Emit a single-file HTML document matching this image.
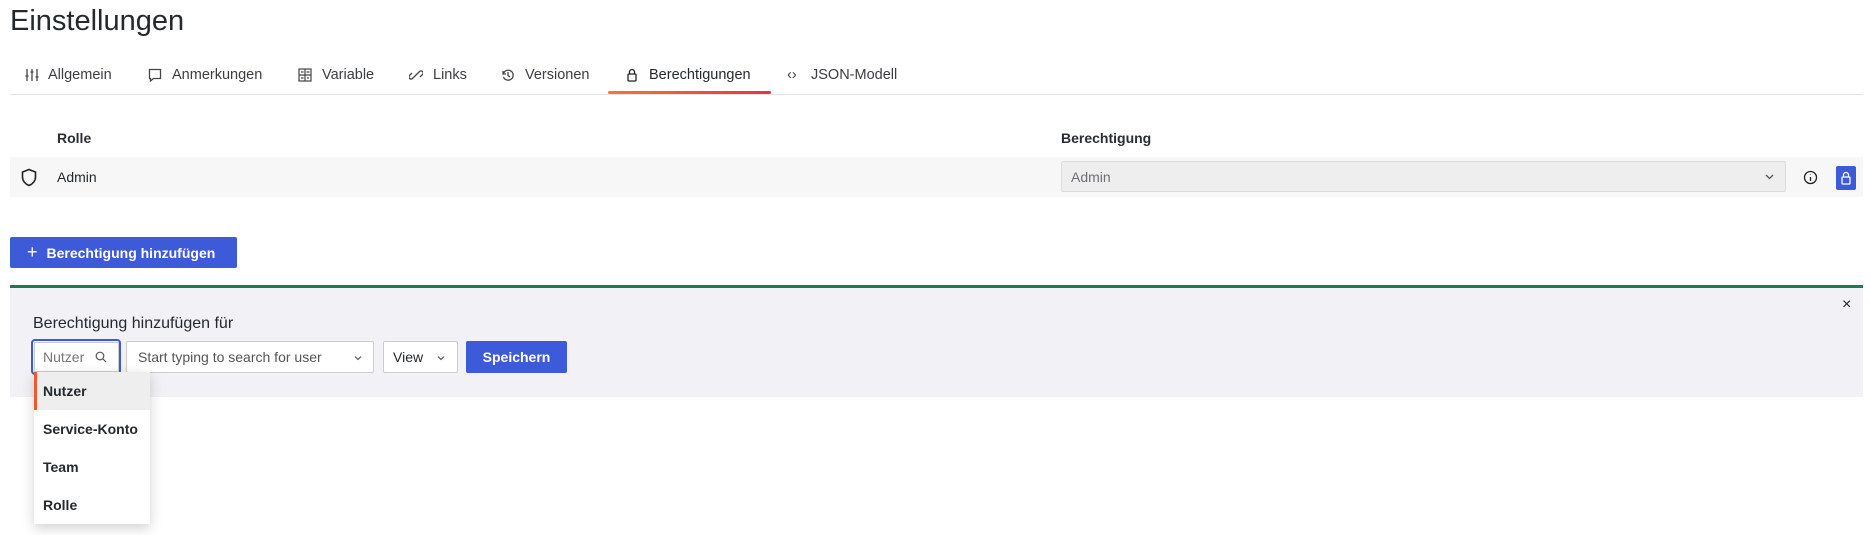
<!DOCTYPE html>
<html><head><meta charset="utf-8"><style>
*{box-sizing:border-box;margin:0;padding:0}
body{width:1871px;height:535px;background:#fff;font-family:"Liberation Sans",sans-serif;color:#24292e;position:relative;overflow:hidden;font-size:14px}
.a{position:absolute}
.t{position:absolute;top:66px;font-size:14.5px;color:#3a3d42;line-height:18px}
.ic{position:absolute;top:68px}
.v{display:flex;align-items:center}
</style></head><body>
<div class="a" style="left:10px;top:3px;font-size:29px;line-height:36px;color:#24292e">Einstellungen</div>

<svg class="ic" style="left:25px" width="14" height="14" viewBox="0 0 14 14" fill="none" stroke="#444" stroke-width="1.3"><path d="M2 1v12M7 1v12M12 1v12M0.5 8h3M5.5 4h3M10.5 9h3"/></svg>
<div class="t" style="left:48px">Allgemein</div>
<svg class="ic" style="left:148px" width="14" height="14" viewBox="0 0 14 14" fill="none" stroke="#444" stroke-width="1.3"><path d="M1.5 1.5h11v9h-7l-3 2.5v-2.5h-1z"/></svg>
<div class="t" style="left:172px">Anmerkungen</div>
<svg class="ic" style="left:298px" width="14" height="14" viewBox="0 0 14 14" fill="none" stroke="#444" stroke-width="1.2"><rect x="1" y="1" width="12" height="12"/><path d="M7 1v12M1 7h12M3 4h2.5M8.5 4h3M9 10h2M3 10h2.5"/></svg>
<div class="t" style="left:322px">Variable</div>
<svg class="ic" style="left:409px" width="14" height="14" viewBox="0 0 14 14" fill="none" stroke="#444" stroke-width="1.3"><path d="M6 8l-2.5 2.5a2 2 0 0 1-3-3L3 5M8 6l2.5-2.5a2 2 0 0 1 3 3L11 9M5 9l4-4"/></svg>
<div class="t" style="left:433px">Links</div>
<svg class="ic" style="left:501px" width="14" height="14" viewBox="0 0 14 14" fill="none" stroke="#444" stroke-width="1.3"><path d="M2 3v3h3M2.3 6A5 5 0 1 1 2.5 9M7 4v3.5l2 1.5"/></svg>
<div class="t" style="left:525px">Versionen</div>
<svg class="ic" style="left:625px" width="14" height="14" viewBox="0 0 14 14" fill="none" stroke="#222" stroke-width="1.3"><rect x="3" y="6" width="8" height="7" rx="1"/><path d="M4.5 6V4a2.5 2.5 0 0 1 5 0v2"/></svg>
<div class="t" style="left:649px;color:#24292e">Berechtigungen</div>
<div class="t" style="left:787px">‹›</div>
<div class="t" style="left:811px">JSON-Modell</div>
<div class="a" style="left:10px;top:94px;width:1853px;height:1px;background:#e4e4e7"></div>
<div class="a" style="left:608px;top:91px;width:163px;height:3px;border-radius:2px;background:linear-gradient(90deg,#f27a2b,#e8304a)"></div>

<div class="a" style="left:57px;top:130px;font-weight:bold;line-height:16px;color:#2a2d33">Rolle</div>
<div class="a" style="left:1061px;top:130px;font-weight:bold;line-height:16px;color:#2a2d33">Berechtigung</div>
<div class="a" style="left:10px;top:157px;width:1853px;height:40px;background:#f7f7f8"></div>
<svg class="a" style="left:20px;top:168px" width="18" height="19" viewBox="0 0 18 19" fill="none" stroke="#222" stroke-width="1.6"><path d="M9 1.5l6.5 2.5v5c0 4-3 7-6.5 8.5C5.5 16 2.5 13 2.5 9V4z"/></svg>
<div class="a" style="left:57px;top:169px;line-height:16px">Admin</div>
<div class="a v" style="left:1061px;top:161px;width:725px;height:31px;background:#eeeeef;border:1px solid #dcdcdf;border-radius:2px;padding-left:9px;color:#6e7077">Admin</div>
<svg class="a" style="left:1765px;top:173px" width="9" height="7" viewBox="0 0 9 7" fill="none" stroke="#555" stroke-width="1.3"><path d="M1 2l3.5 3.5L8 2"/></svg>
<svg class="a" style="left:1803px;top:170px" width="15" height="15" viewBox="0 0 15 15" fill="none" stroke="#222" stroke-width="1.3"><circle cx="7.5" cy="7.5" r="6"/><path d="M7.5 7v4M7.5 4.5v.5"/></svg>
<div class="a" style="left:1836px;top:166px;width:20px;height:24px;background:#3d5bd9;border-radius:2px"></div>
<svg class="a" style="left:1840px;top:171px" width="12" height="14" viewBox="0 0 12 14" fill="none" stroke="#fff" stroke-width="1.3"><rect x="2" y="6" width="8" height="7" rx="1"/><path d="M3.5 6V4a2.5 2.5 0 0 1 5 0v2"/></svg>

<div class="a v" style="left:10px;top:237px;width:227px;height:31px;background:#3d5bd9;border-radius:2px;color:#fff;font-weight:bold;padding-left:17px"><span style="font-size:18px;font-weight:normal;margin-right:9px">+</span>Berechtigung hinzufügen</div>

<div class="a" style="left:10px;top:285px;width:1853px;height:3px;background:#1e7a52"></div>
<div class="a" style="left:10px;top:288px;width:1853px;height:109px;background:#f2f2f6"></div>
<div class="a" style="left:1842px;top:296px;font-size:16px;color:#222">×</div>
<div class="a" style="left:33px;top:314px;font-size:16px;line-height:20px">Berechtigung hinzufügen für</div>
<div class="a" style="left:31px;top:339px;width:90px;height:36px;border:2px solid #3d5bd9;border-radius:4px"></div>
<div class="a v" style="left:34px;top:342px;width:85px;height:30px;background:#fff;border:1px solid #ccc;padding-left:8px;color:#777">Nutzer</div>
<svg class="a" style="left:95px;top:351px" width="12" height="12" viewBox="0 0 12 12" fill="none" stroke="#555" stroke-width="1.2"><circle cx="5" cy="5" r="3.8"/><path d="M8 8l3 3"/></svg>
<div class="a v" style="left:126px;top:341px;width:248px;height:32px;background:#fff;border:1px solid #ccc;border-radius:2px;padding-left:11px;color:#555">Start typing to search for user</div>
<svg class="a" style="left:354px;top:355px" width="8" height="6" viewBox="0 0 8 6" fill="none" stroke="#555" stroke-width="1.2"><path d="M1 1.5l3 3 3-3"/></svg>
<div class="a v" style="left:383px;top:341px;width:75px;height:32px;background:#fff;border:1px solid #ccc;border-radius:2px;padding-left:9px">View</div>
<svg class="a" style="left:437px;top:355px" width="8" height="6" viewBox="0 0 8 6" fill="none" stroke="#555" stroke-width="1.2"><path d="M1 1.5l3 3 3-3"/></svg>
<div class="a v" style="left:466px;top:341px;width:101px;height:32px;background:#3d5bd9;border-radius:2px;color:#fff;font-weight:bold;justify-content:center">Speichern</div>

<div class="a" style="left:34px;top:372px;width:116px;height:152px;background:#fff;box-shadow:0 4px 12px rgba(0,0,0,.18)">
<div class="v" style="height:38px;background:#eeeeef;border-left:3px solid #f05a28;padding-left:6px;font-weight:bold">Nutzer</div>
<div class="v" style="height:38px;padding-left:9px;font-weight:bold">Service-Konto</div>
<div class="v" style="height:38px;padding-left:9px;font-weight:bold">Team</div>
<div class="v" style="height:38px;padding-left:9px;font-weight:bold">Rolle</div>
</div>
</body></html>
